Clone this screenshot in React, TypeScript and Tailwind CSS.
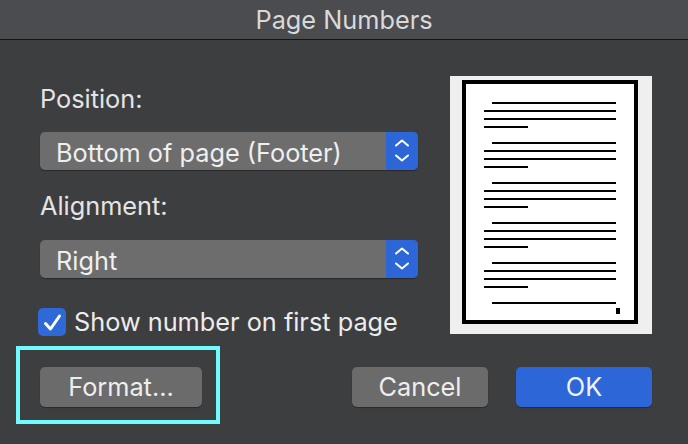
import React from 'react';

const PARAGRAPHS = [26, 66, 106, 146, 186];

function Stepper() {
  return (
    <div className="w-[32px] h-full bg-[#2d67d7] rounded-r-[5px] flex items-center justify-center">
      <svg width="32" height="38" viewBox="0 0 32 38" fill="none">
        <path d="M10 13.5 L16 8.5 L22 13.5" stroke="#fff" strokeWidth="2" strokeLinecap="round" strokeLinejoin="round" />
        <path d="M10 23.5 L16 28.5 L22 23.5" stroke="#fff" strokeWidth="2" strokeLinecap="round" strokeLinejoin="round" />
      </svg>
    </div>
  );
}

function Select({ value }: { value: string }) {
  return (
    <div className="h-[38px] w-[378px] flex rounded-[5px] bg-[#6d6d6d] shadow-[0_1px_1px_rgba(0,0,0,0.35)]">
      <div className="flex-1 flex items-center pl-[16px] pt-[3px] text-[#efefef] leading-[30px]">{value}</div>
      <Stepper />
    </div>
  );
}

function PagePreview() {
  return (
    <div className="w-[202px] h-[258px] bg-[#efefef]">
      <svg width="202" height="258" viewBox="0 0 202 258">
        <rect x="14" y="6" width="172" height="240" fill="#fff" stroke="#000" strokeWidth="4" />
        {PARAGRAPHS.map((y) => (
          <g key={y} fill="#000">
            <rect x="42" y={y} width="124" height="2" />
            <rect x="34" y={y + 8} width="132" height="2" />
            <rect x="34" y={y + 16} width="132" height="2" />
            <rect x="34" y={y + 24} width="44" height="2" />
          </g>
        ))}
        <rect x="42" y="226" width="124" height="2" fill="#000" />
        <rect x="166" y="232" width="4" height="6" fill="#000" />
      </svg>
    </div>
  );
}

function Button({ label, primary }: { label: string; primary?: boolean }) {
  return (
    <button
      className={
        primary
          ? 'h-[40px] w-[136px] rounded-[5px] bg-[#2d67d7] text-[#f2f2f2] leading-[30px] shadow-[0_1px_1px_rgba(0,0,0,0.35)]'
          : 'h-[40px] w-[136px] rounded-[5px] bg-[#6b6b6b] text-[#eeeeee] leading-[30px] shadow-[0_1px_1px_rgba(0,0,0,0.35)]'
      }
    >
      {label}
    </button>
  );
}

export default function App() {
  return (
    <div
      className="w-[688px] h-[444px] bg-[#3d3e40] flex flex-col text-[25.3px] text-[#e4e4e4] overflow-hidden"
      style={{ fontFamily: 'Inter, "Liberation Sans", sans-serif' }}
    >
      <div className="h-[40px] shrink-0 bg-[#4a4c4f] border-b border-[#141414] flex items-center justify-center text-[#d9d9d9] leading-[30px]">
        Page Numbers
      </div>

      <div className="flex pl-[40px]">
        <div className="flex flex-col w-[378px]">
          <div className="mt-[44px] leading-[30px]">Position:</div>
          <div className="mt-[18px]">
            <Select value="Bottom of page (Footer)" />
          </div>
          <div className="mt-[21px] leading-[30px]">Alignment:</div>
          <div className="mt-[19px]">
            <Select value="Right" />
          </div>
          <div className="mt-[29px] -ml-[2px] flex items-center gap-[8px]">
            <div className="w-[28px] h-[28px] rounded-[5px] bg-[#2e69d7] flex items-center justify-center">
              <svg width="28" height="28" viewBox="0 0 28 28" fill="none">
                <path d="M7.5 15.5 L12.5 21 L21.5 8" stroke="#fff" strokeWidth="3" strokeLinecap="round" strokeLinejoin="round" />
              </svg>
            </div>
            <span className="leading-[30px] text-[#ececec]">Show number on first page</span>
          </div>
        </div>
        <div className="ml-[32px] mt-[36px]">
          <PagePreview />
        </div>
      </div>

      <div className="flex pl-[40px] pr-[36px] mt-[30px]">
        <div className="relative">
          <button className="h-[40px] w-[162px] rounded-[5px] bg-[#6b6b6b] text-[#eeeeee] leading-[30px] shadow-[0_1px_1px_rgba(0,0,0,0.35)]">
            Format...
          </button>
          <div className="absolute -left-[24px] -top-[21px] w-[204px] h-[78px] border-4 border-[#6ffbff]" />
        </div>
        <div className="ml-auto flex gap-[28px]">
          <Button label="Cancel" />
          <Button label="OK" primary />
        </div>
      </div>
    </div>
  );
}
